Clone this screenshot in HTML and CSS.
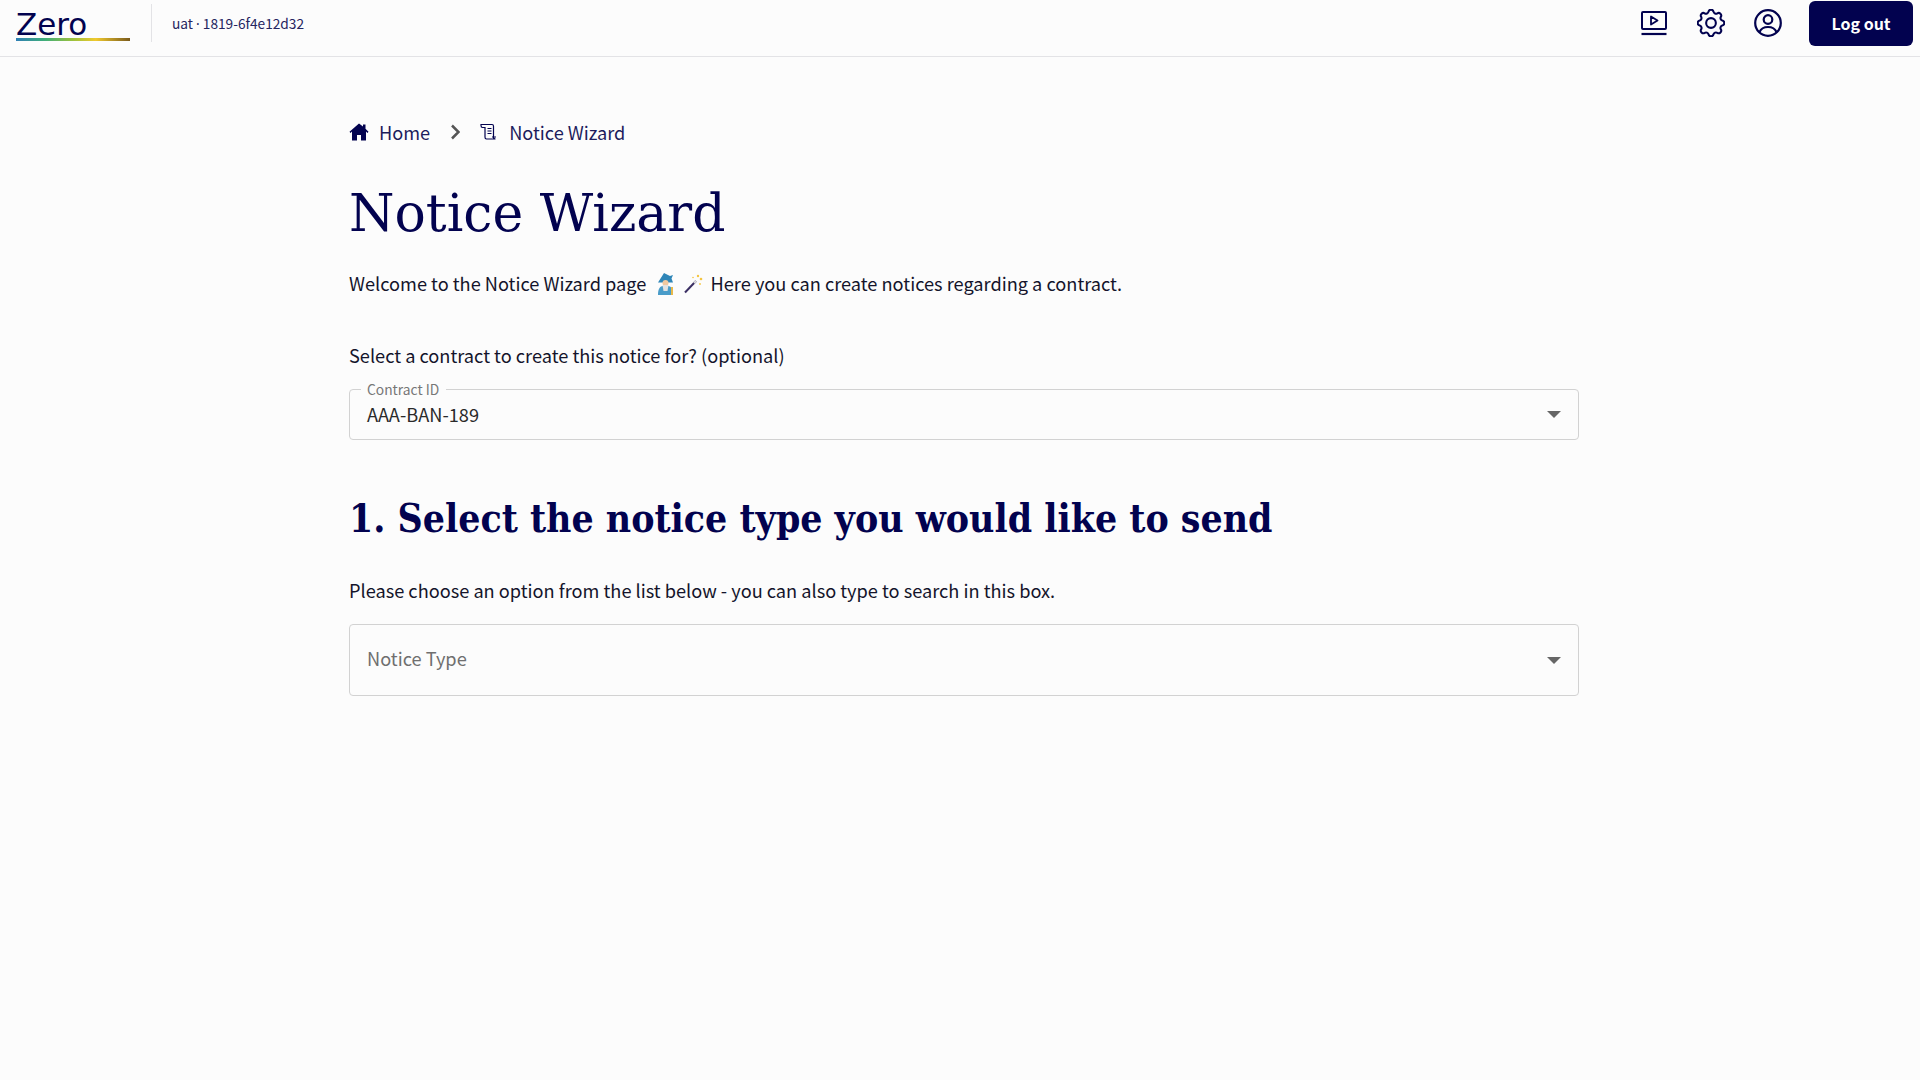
FILE: index.html
```html
<!DOCTYPE html>
<html lang="en">
<head>
  <meta charset="UTF-8">
  <meta name="viewport" content="width=device-width, initial-scale=1.0">
  <title>Notice Wizard</title>
  <link rel="stylesheet" href="styles.css">
</head>
<body>
  <header class="topbar">
    <div class="brand">
      <div class="logo">
        <span class="logo-word">Zero</span>
        <span class="logo-line"></span>
      </div>
      <span class="env">uat <span class="env-dot">·</span> 1819-6f4e12d32</span>
    </div>
    <div class="actions">
      <svg class="icon-btn" viewBox="0 0 28 28" fill="none" stroke="#02024f" stroke-width="2">
        <rect x="2" y="3" width="24" height="17" rx="1"/>
        <path d="M11 7.500v8l6.500-4z" stroke-width="1.800" stroke-linejoin="round"/>
        <path d="M1.500 25h25" stroke-width="2.200"/>
      </svg>
      <svg class="icon-btn" viewBox="2.500 2.500 19 19" fill="none" stroke="#02024f" stroke-width="1.400" stroke-linecap="round" stroke-linejoin="round">
        <path d="M10.300 4.300c.4-1.800 3-1.800 3.400 0a1.700 1.700 0 0 0 2.600 1.100c1.500-.9 3.300.8 2.400 2.400a1.700 1.700 0 0 0 1 2.500c1.800.4 1.800 3 0 3.400a1.700 1.700 0 0 0-1 2.600c.9 1.500-.9 3.300-2.400 2.400a1.700 1.700 0 0 0-2.600 1c-.4 1.800-3 1.800-3.400 0a1.700 1.700 0 0 0-2.600-1c-1.500.9-3.300-.9-2.400-2.400a1.700 1.700 0 0 0-1-2.600c-1.800-.4-1.800-3 0-3.400a1.700 1.700 0 0 0 1-2.500c-.9-1.600.9-3.300 2.400-2.400a1.700 1.700 0 0 0 2.600-1.100z"/>
        <circle cx="12" cy="12" r="3.300"/>
      </svg>
      <svg class="icon-btn" viewBox="0 0 28 28" fill="none" stroke="#02024f" stroke-width="2.200">
        <circle cx="14" cy="14" r="12.800"/>
        <circle cx="14" cy="10.500" r="4.300"/>
        <path d="M5.500 23c1.500-3.500 4.500-5 8.500-5s7 1.500 8.500 5"/>
      </svg>
      <button class="logout" type="button">Log out</button>
    </div>
  </header>

  <main class="content">
    <nav class="crumbs">
      <svg class="crumb-icon" viewBox="0 0 20 18" fill="#02024f">
        <path d="M10 .500 .500 8.800l1 1.100L3 8.600V17.500h5v-5.500h4v5.500h5V8.600l1.500 1.300 1-1.100L16.500 5.700V1.500h-2.500v2z"/>
      </svg>
      <span>Home</span>
      <svg class="crumb-sep" viewBox="0 0 10 16" fill="none" stroke="#555" stroke-width="2.500">
        <path d="M2 1.500 8.500 8 2 14.500"/>
      </svg>
      <svg class="crumb-icon scroll" viewBox="0 0 18 18" fill="none" stroke="#02024f" stroke-width="1.200">
        <path d="M1 1.500h11c1 0 1.500.7 1.500 1.700V14c0 1.200.8 2 2 2H6.500c-1 0-1.500-.7-1.500-1.700V4.500H2.500C1.500 4.500 1 3.500 1 2.500z"/>
        <path d="M7.500 5.500h4M7.500 8h4M7.500 10.500h4M12 14h4"/>
      </svg>
      <span>Notice Wizard</span>
    </nav>

    <h1 class="title">Notice Wizard</h1>

    <p class="intro">
      Welcome to the Notice Wizard page
      <svg class="emoji wizard" viewBox="0 0 20 22">
        <path d="M9 0 15 3l3 -1-1.500 3.500L18 9.500H3z" fill="#2f86b8"/>
        <circle cx="10.500" cy="10" r="3" fill="#f2c9a0"/>
        <path d="M3 22c0-6 2-9 5-9l2.500 3 2.500-3c3 0 5 3 5 9z" fill="#4a9cc9"/>
        <path d="M7.500 12h6l-1 6h-4z" fill="#e2e2e2"/>
        <path d="M16 14h2v8h-2z" fill="#e8b94a"/>
      </svg>
      <svg class="emoji wand" viewBox="0 0 20 20">
        <path d="M2 18.500 13 7" stroke="#3b2f63" stroke-width="2" fill="none"/>
        <path d="M11 9 13 7" stroke="#ddd" stroke-width="2" fill="none"/>
        <circle cx="15" cy="2" r="1.200" fill="#f4c542"/>
        <circle cx="18" cy="5" r="1.300" fill="#f4c542"/>
        <circle cx="10" cy="3.500" r=".8" fill="#f4c542"/>
        <circle cx="17" cy="10" r=".9" fill="#f4c542"/>
      </svg>
      Here you can create notices regarding a contract.
    </p>

    <p class="prompt">Select a contract to create this notice for? (optional)</p>
    <div class="field field-small">
      <span class="field-label">Contract ID</span>
      <span class="field-value">AAA-BAN-189</span>
      <span class="caret"></span>
    </div>

    <h2 class="step">1. Select the notice type you would like to send</h2>

    <p class="hint">Please choose an option from the list below - you can also type to search in this box.</p>
    <div class="field field-large">
      <span class="field-placeholder">Notice Type</span>
      <span class="caret"></span>
    </div>
  </main>
</body>
</html>
```

FILE: styles.css
```css
body {
  font-family: "Noto Sans CJK SC", "Noto Sans", sans-serif;
  background-color: #fcfcfc;
  color: #14142b;
  margin: 0;
  padding: 0;
  min-height: 100vh;
}
.topbar {
  box-sizing: border-box;
  height: 57px;
  border-bottom: 1px solid #e3e3e6;
  display: flex;
  justify-content: space-between;
  align-items: center;
  padding: 0 7px 10px 16px;
}
.brand {
  display: flex;
  align-items: center;
}
.logo {
  width: 114px;
  height: 38px;
  padding-right: 21px;
  margin-right: 20px;
  border-right: 1px solid #e3e3e6;
}
.logo-word {
  display: block;
  height: 34px;
  font-family: "DejaVu Sans", sans-serif;
  font-size: 31px;
  line-height: 40px;
  color: #02024f;
}
.logo-line {
  display: block;
  width: 114px;
  height: 3px;
  background: linear-gradient(90deg, #2f7fb5, #3fae7a 25%, #9cc23d 50%, #f0c92e 70%, #7a5a1c);
}
.env {
  font-size: 13.7px;
  color: #25255f;
}
.env-dot {
  font-family: "Noto Sans", sans-serif;
}
.actions {
  display: flex;
  align-items: center;
}
.icon-btn {
  width: 28px;
  height: 28px;
  margin-right: 29px;
}
.logout {
  width: 104px;
  height: 45px;
  margin-left: -2px;
  background-color: #02024f;
  color: #fff;
  border: none;
  border-radius: 6px;
  font-family: inherit;
  font-size: 16px;
  font-weight: 700;
}
.content {
  width: 1230px;
  margin-left: 349px;
}
.crumbs {
  display: flex;
  align-items: center;
  height: 28px;
  margin-top: 61px;
  font-size: 18.2px;
  color: #1c1c5c;
}
.crumb-icon {
  width: 20px;
  height: 18px;
  margin-right: 10px;
}
.crumb-icon.scroll {
  width: 18px;
  margin-right: 11px;
}
.crumb-sep {
  width: 10px;
  height: 16px;
  margin: 0 20px 0 20px;
}
.title {
  font-family: "DejaVu Serif", serif;
  font-weight: 400;
  font-size: 52px;
  line-height: 72px;
  color: #02024f;
  margin: 31px 0 0;
}
.intro {
  font-size: 18.2px;
  line-height: 28px;
  margin: 20px 0 0;
}
.emoji {
  width: 20px;
  height: 20px;
  vertical-align: -3px;
}
.emoji.wizard {
  height: 22px;
  margin-left: 5px;
  vertical-align: -4px;
}
.emoji.wand {
  margin: 0 3px 0 4px;
}
.prompt {
  font-size: 18.2px;
  line-height: 28px;
  margin: 44px 0 0;
}
.field {
  box-sizing: border-box;
  border: 1px solid #d2d2d2;
  border-radius: 4px;
  display: flex;
  align-items: center;
  justify-content: space-between;
  padding: 0 17px;
  position: relative;
}
.field-small {
  height: 51px;
  margin-top: 20px;
}
.field-large {
  height: 72px;
  margin-top: 20px;
}
.field-label {
  position: absolute;
  left: 11px;
  top: -9px;
  padding: 0 7px 0 6px;
  background-color: #fcfcfc;
  font-size: 13.800px;
  line-height: 16px;
  color: #777;
}
.field-value {
  font-size: 18.2px;
  line-height: 28px;
  margin-top: -2px;
  color: #2a2a2a;
}
.field-placeholder {
  font-size: 18.2px;
  line-height: 28px;
  margin-top: -4px;
  color: #6f6f6f;
}
.caret {
  width: 0;
  height: 0;
  border-left: 7px solid transparent;
  border-right: 7px solid transparent;
  border-top: 7px solid #666;
}
.step {
  font-family: "DejaVu Serif", serif;
  font-stretch: condensed;
  font-weight: 700;
  font-size: 38.800px;
  line-height: 56px;
  color: #02024f;
  margin: 51px 0 0;
}
.hint {
  font-size: 18.2px;
  line-height: 28px;
  margin: 29px 0 0;
}
```
